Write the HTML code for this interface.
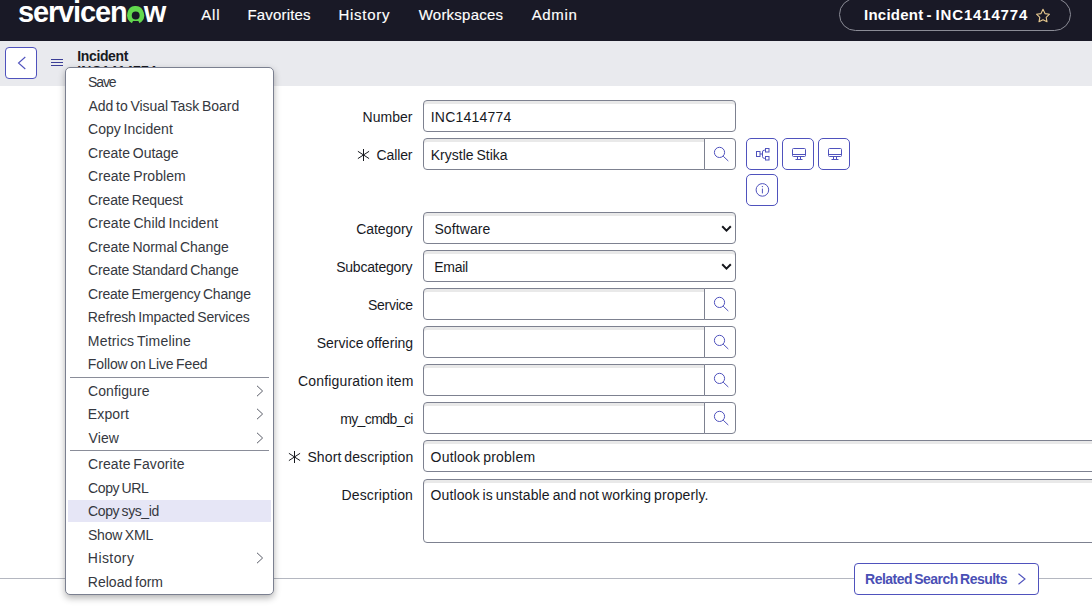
<!DOCTYPE html>
<html><head><meta charset="utf-8"><title>Incident</title>
<style>
*{box-sizing:border-box}
html,body{margin:0;padding:0}
body{width:1092px;height:608px;overflow:hidden;background:#fff;font-family:"Liberation Sans",sans-serif;color:#181a1f;position:relative;font-size:14px}
.a{position:absolute}
.t{position:absolute;line-height:20px;white-space:nowrap}
#top{left:0;top:0;width:1092px;height:41px;background:#191926}
#logo,#crumb{margin:0;padding:0;height:0}
#pill{left:839px;top:-2px;width:232px;height:33px;border:1px solid #8b8c96;border-radius:17px}
#sub{left:0;top:41px;width:1092px;height:45px;background:#e9eaee}
#back{left:5px;top:47px;width:32px;height:32px;border:1px solid #4f52bd;border-radius:4px;background:#fff}
.inp{position:absolute;left:423px;height:32px;border:1px solid #7d8190;border-radius:4px;background:#fff;box-shadow:inset 0 3px 0 0 #e9e9e9}
.ref{width:282px;border-radius:4px 0 0 4px}
.sbtn{position:absolute;left:704px;width:32px;height:32px;border:1px solid #7d8190;border-radius:0 4px 4px 0;background:#fff}
.ibtn{position:absolute;width:32px;height:32px;border:1px solid #4f52bd;border-radius:5px;background:#fff}
#menu{left:65px;top:67px;width:209px;height:528px;background:#fff;border:1px solid #7b8090;border-radius:5px;box-shadow:0 3px 7px rgba(0,0,0,0.3)}
.sep{position:absolute;left:70px;width:199px;height:1px;background:#8a8d99}
#hl{left:68px;top:500px;width:203px;height:22px;background:#e6e6f6}
#hr{left:0;top:578px;width:1092px;height:1px;background:#b4b7c0}
#rel{left:854px;top:563px;width:185px;height:32px;border:1px solid #4f52bd;border-radius:4px;background:#fff}
</style></head><body>
<div id="top" class="a"></div>
<div id="logo"><span class="t" style="left:17.95px;top:1.5px;font-size:29px;letter-spacing:-1.132px;word-spacing:-2.28px;color:#ffffff;font-weight:bold">servicen</span><span class="t" style="left:126.56px;top:1.5px;font-size:29px;letter-spacing:0.000px;word-spacing:-2.28px;color:#62d84e;font-weight:bold">o</span><span class="t" style="left:143.64px;top:1.5px;font-size:29px;letter-spacing:0.000px;word-spacing:-2.28px;color:#ffffff;font-weight:bold">w</span></div>
<svg class="a" style="left:125px;top:5px" width="22" height="20" viewBox="0 0 22 20"><circle cx="10.7" cy="10.5" r="6.3" fill="#191926" stroke="#62d84e" stroke-width="4.7"/><path d="M6.0 20L8 15.9h5.4L15.4 20z" fill="#191926"/></svg>
<div class="t" style="left:201.18px;top:4.6px;font-size:15px;letter-spacing:0.894px;word-spacing:-1.18px;color:#ffffff;-webkit-text-stroke:0.15px #fff">All</div>
<div class="t" style="left:247.54px;top:4.6px;font-size:15px;letter-spacing:0.158px;word-spacing:-1.18px;color:#ffffff;-webkit-text-stroke:0.15px #fff">Favorites</div>
<div class="t" style="left:338.54px;top:4.6px;font-size:15px;letter-spacing:0.712px;word-spacing:-1.18px;color:#ffffff;-webkit-text-stroke:0.15px #fff">History</div>
<div class="t" style="left:418.71px;top:4.6px;font-size:15px;letter-spacing:0.226px;word-spacing:-1.18px;color:#ffffff;-webkit-text-stroke:0.15px #fff">Workspaces</div>
<div class="t" style="left:531.68px;top:4.6px;font-size:15px;letter-spacing:0.655px;word-spacing:-1.18px;color:#ffffff;-webkit-text-stroke:0.15px #fff">Admin</div>
<div id="pill" class="a"></div>
<div id="crumb"><span class="t" style="left:864.09px;top:4.6px;font-size:15px;letter-spacing:0.222px;word-spacing:-1.18px;color:#ffffff;font-weight:bold">Incident -</span> <span class="t" style="left:935.59px;top:4.6px;font-size:15px;letter-spacing:0.831px;word-spacing:-1.18px;color:#ffffff;font-weight:bold">INC1414774</span></div>
<svg class="a" style="left:1035px;top:8px" width="16" height="16" viewBox="0 0 16 16"><path d="M8 1.3l2 4.3 4.5.6-3.3 3.1.8 4.5L8 11.7l-4 2.1.8-4.5-3.3-3.1 4.5-.6z" fill="none" stroke="#e6c88e" stroke-width="1.1" stroke-linejoin="round"/></svg>
<div id="sub" class="a"></div>
<div id="back" class="a"><svg class="a" style="left:11px;top:8px" width="10" height="14" viewBox="0 0 10 14"><path d="M8.3 1L1.5 7l6.8 6" fill="none" stroke="#4f52bd" stroke-width="1.1"/></svg></div>
<svg class="a" style="left:51px;top:58px" width="12" height="9" viewBox="0 0 12 9"><path d="M0 1.5h12M0 4.5h12M0 7.5h12" stroke="#3b3e96" stroke-width="1"/></svg>
<div class="t" style="left:77.35px;top:45.9px;font-size:14px;letter-spacing:-0.383px;word-spacing:-1.10px;color:#181a1f;font-weight:bold">Incident</div>
<div class="t" style="left:77.35px;top:61.1px;font-size:14px;letter-spacing:0.073px;word-spacing:-1.10px;color:#181a1f;font-weight:bold">INC1414774</div>
<div class="t" style="left:362.56px;top:107.1px;font-size:14px;letter-spacing:0.035px;word-spacing:-1.10px;color:#181a1f">Number</div>
<div class="inp" style="top:100px;width:313px"></div>
<div class="t" style="left:376.50px;top:145.1px;font-size:14px;letter-spacing:-0.107px;word-spacing:-1.10px;color:#181a1f">Caller</div>
<div class="inp ref" style="top:138px"></div>
<div class="sbtn" style="top:138px"><svg class="a" style="left:7px;top:6px" width="18" height="18" viewBox="0 0 18 18"><circle cx="7.5" cy="7.4" r="5.1" fill="none" stroke="#4f52bd" stroke-width="1"/><path d="M11.2 11.2L16.3 16" stroke="#4f52bd" stroke-width="1" fill="none"/></svg></div>
<div class="t" style="left:356.25px;top:219.1px;font-size:14px;letter-spacing:-0.062px;word-spacing:-1.10px;color:#181a1f">Category</div>
<div class="inp" style="top:212px;width:313px"><svg class="a" style="left:297px;top:12px" width="11" height="8" viewBox="0 0 11 8"><path d="M1.2 1.3L5.5 5.6L9.8 1.3" fill="none" stroke="#15171c" stroke-width="2"/></svg></div>
<div class="t" style="left:336.14px;top:257.1px;font-size:14px;letter-spacing:-0.213px;word-spacing:-1.10px;color:#181a1f">Subcategory</div>
<div class="inp" style="top:250px;width:313px"><svg class="a" style="left:297px;top:12px" width="11" height="8" viewBox="0 0 11 8"><path d="M1.2 1.3L5.5 5.6L9.8 1.3" fill="none" stroke="#15171c" stroke-width="2"/></svg></div>
<div class="t" style="left:367.89px;top:295.1px;font-size:14px;letter-spacing:-0.244px;word-spacing:-1.10px;color:#181a1f">Service</div>
<div class="inp ref" style="top:288px"></div>
<div class="sbtn" style="top:288px"><svg class="a" style="left:7px;top:6px" width="18" height="18" viewBox="0 0 18 18"><circle cx="7.5" cy="7.4" r="5.1" fill="none" stroke="#4f52bd" stroke-width="1"/><path d="M11.2 11.2L16.3 16" stroke="#4f52bd" stroke-width="1" fill="none"/></svg></div>
<div class="t" style="left:316.64px;top:333.1px;font-size:14px;letter-spacing:0.040px;word-spacing:-1.10px;color:#181a1f">Service offering</div>
<div class="inp ref" style="top:326px"></div>
<div class="sbtn" style="top:326px"><svg class="a" style="left:7px;top:6px" width="18" height="18" viewBox="0 0 18 18"><circle cx="7.5" cy="7.4" r="5.1" fill="none" stroke="#4f52bd" stroke-width="1"/><path d="M11.2 11.2L16.3 16" stroke="#4f52bd" stroke-width="1" fill="none"/></svg></div>
<div class="t" style="left:298.00px;top:371.1px;font-size:14px;letter-spacing:0.172px;word-spacing:-1.10px;color:#181a1f">Configuration item</div>
<div class="inp ref" style="top:364px"></div>
<div class="sbtn" style="top:364px"><svg class="a" style="left:7px;top:6px" width="18" height="18" viewBox="0 0 18 18"><circle cx="7.5" cy="7.4" r="5.1" fill="none" stroke="#4f52bd" stroke-width="1"/><path d="M11.2 11.2L16.3 16" stroke="#4f52bd" stroke-width="1" fill="none"/></svg></div>
<div class="t" style="left:340.13px;top:409.1px;font-size:14px;letter-spacing:-0.586px;word-spacing:-1.10px;color:#181a1f">my_cmdb_ci</div>
<div class="inp ref" style="top:402px"></div>
<div class="sbtn" style="top:402px"><svg class="a" style="left:7px;top:6px" width="18" height="18" viewBox="0 0 18 18"><circle cx="7.5" cy="7.4" r="5.1" fill="none" stroke="#4f52bd" stroke-width="1"/><path d="M11.2 11.2L16.3 16" stroke="#4f52bd" stroke-width="1" fill="none"/></svg></div>
<div class="t" style="left:307.39px;top:447.1px;font-size:14px;letter-spacing:0.115px;word-spacing:-1.10px;color:#181a1f">Short description</div>
<div class="inp" style="top:440px;width:700px"></div>
<div class="t" style="left:341.56px;top:484.6px;font-size:14px;letter-spacing:0.133px;word-spacing:-1.10px;color:#181a1f">Description</div>
<div class="inp" style="top:479px;width:700px;height:64px"></div>
<div class="t" style="left:430.73px;top:107.1px;font-size:14px;letter-spacing:0.228px;word-spacing:-1.10px;color:#181a1f">INC1414774</div>
<div class="t" style="left:430.76px;top:145.1px;font-size:14px;letter-spacing:0.013px;word-spacing:-1.10px;color:#181a1f">Krystle Stika</div>
<div class="t" style="left:434.39px;top:219.1px;font-size:14px;letter-spacing:0.108px;word-spacing:-1.10px;color:#181a1f">Software</div>
<div class="t" style="left:434.31px;top:257.1px;font-size:14px;letter-spacing:-0.280px;word-spacing:-1.10px;color:#181a1f">Email</div>
<div class="t" style="left:430.56px;top:447.1px;font-size:14px;letter-spacing:0.208px;word-spacing:-1.10px;color:#181a1f">Outlook problem</div>
<div class="t" style="left:430.56px;top:484.6px;font-size:14px;letter-spacing:0.123px;word-spacing:-1.10px;color:#181a1f">Outlook is unstable and not working properly.</div>
<svg class="a" style="left:357px;top:148px" width="13" height="14" viewBox="0 0 13 14"><path d="M6.5 1v12M0.9 3.3l11.2 7.3M12.1 3.3L0.9 10.6" stroke="#181a1f" stroke-width="1" fill="none"/></svg>
<svg class="a" style="left:288px;top:450px" width="13" height="14" viewBox="0 0 13 14"><path d="M6.5 1v12M0.9 3.3l11.2 7.3M12.1 3.3L0.9 10.6" stroke="#181a1f" stroke-width="1" fill="none"/></svg>
<div class="ibtn" style="left:746px;top:138px"><svg class="a" style="left:0;top:0" width="30" height="30" viewBox="0 0 30 30"><g fill="none" stroke="#4f52bd" stroke-width="1"><rect x="9.5" y="12.5" width="3.5" height="5"/><rect x="18.5" y="9.5" width="3.5" height="3.5"/><rect x="18.5" y="17.5" width="3.5" height="3.5"/><path d="M13 15h2.5M18.5 11.2h-1.2a1.8 1.8 0 0 0-1.8 1.8v4.5a1.8 1.8 0 0 0 1.8 1.8h1.2"/></g></svg></div>
<div class="ibtn" style="left:782px;top:138px"><svg class="a" style="left:0;top:0" width="30" height="30" viewBox="0 0 30 30"><g fill="none" stroke="#4f52bd" stroke-width="1"><rect x="9.5" y="9.5" width="13" height="8" rx="1"/><path d="M9.5 15.5h13M14.5 17.5v3M17.5 17.5v3M12.5 20.5h7"/></g></svg></div>
<div class="ibtn" style="left:818px;top:138px"><svg class="a" style="left:0;top:0" width="30" height="30" viewBox="0 0 30 30"><g fill="none" stroke="#4f52bd" stroke-width="1"><rect x="9.5" y="9.5" width="13" height="8" rx="1"/><path d="M9.5 15.5h13M14.5 17.5v3M17.5 17.5v3M12.5 20.5h7"/></g></svg></div>
<div class="ibtn" style="left:746px;top:174px"><svg class="a" style="left:0;top:0" width="30" height="30" viewBox="0 0 30 30"><g fill="none" stroke="#4f52bd" stroke-width="1"><circle cx="15.4" cy="14.9" r="6.3"/><path d="M15.4 13.6v4.8"/></g><circle cx="15.4" cy="11.6" r="0.7" fill="#4f52bd"/></svg></div>
<div id="hr" class="a"></div>
<div id="rel" class="a"></div>
<div class="t" style="left:865.05px;top:569.0px;font-size:14px;letter-spacing:-0.522px;word-spacing:-1.10px;color:#4a4fb5;font-weight:bold">Related Search Results</div>
<svg class="a" style="left:1017px;top:573px" width="10" height="12" viewBox="0 0 10 12"><path d="M1.5 0.8L8 6L1.5 11.2" fill="none" stroke="#4f52bd" stroke-width="1.1"/></svg>
<div id="menu" class="a"></div>
<div id="hl" class="a"></div>
<div class="sep" style="top:377px"></div><div class="sep" style="top:450px"></div>
<div class="t" style="left:87.94px;top:72.3px;font-size:14px;letter-spacing:-1.068px;word-spacing:-1.10px;color:#353840">Save</div>
<div class="t" style="left:88.48px;top:95.8px;font-size:14px;letter-spacing:-0.035px;word-spacing:-1.10px;color:#353840">Add to Visual Task Board</div>
<div class="t" style="left:88.05px;top:119.3px;font-size:14px;letter-spacing:0.019px;word-spacing:-1.10px;color:#353840">Copy Incident</div>
<div class="t" style="left:88.05px;top:142.8px;font-size:14px;letter-spacing:-0.013px;word-spacing:-1.10px;color:#353840">Create Outage</div>
<div class="t" style="left:88.05px;top:166.3px;font-size:14px;letter-spacing:0.056px;word-spacing:-1.10px;color:#353840">Create Problem</div>
<div class="t" style="left:88.05px;top:189.8px;font-size:14px;letter-spacing:-0.156px;word-spacing:-1.10px;color:#353840">Create Request</div>
<div class="t" style="left:88.05px;top:213.3px;font-size:14px;letter-spacing:0.080px;word-spacing:-1.10px;color:#353840">Create Child Incident</div>
<div class="t" style="left:88.05px;top:236.8px;font-size:14px;letter-spacing:-0.058px;word-spacing:-1.10px;color:#353840">Create Normal Change</div>
<div class="t" style="left:88.05px;top:260.3px;font-size:14px;letter-spacing:-0.135px;word-spacing:-1.10px;color:#353840">Create Standard Change</div>
<div class="t" style="left:88.05px;top:283.8px;font-size:14px;letter-spacing:-0.206px;word-spacing:-1.10px;color:#353840">Create Emergency Change</div>
<div class="t" style="left:87.86px;top:307.3px;font-size:14px;letter-spacing:-0.165px;word-spacing:-1.10px;color:#353840">Refresh Impacted Services</div>
<div class="t" style="left:87.86px;top:330.8px;font-size:14px;letter-spacing:0.191px;word-spacing:-1.10px;color:#353840">Metrics Timeline</div>
<div class="t" style="left:87.86px;top:354.1px;font-size:14px;letter-spacing:-0.122px;word-spacing:-1.10px;color:#353840">Follow on Live Feed</div>
<div class="t" style="left:88.05px;top:380.6px;font-size:14px;letter-spacing:0.083px;word-spacing:-1.10px;color:#353840">Configure</div>
<div class="t" style="left:87.86px;top:404.1px;font-size:14px;letter-spacing:0.122px;word-spacing:-1.10px;color:#353840">Export</div>
<div class="t" style="left:88.48px;top:427.6px;font-size:14px;letter-spacing:0.128px;word-spacing:-1.10px;color:#353840">View</div>
<div class="t" style="left:88.05px;top:454.1px;font-size:14px;letter-spacing:0.072px;word-spacing:-1.10px;color:#353840">Create Favorite</div>
<div class="t" style="left:88.05px;top:477.6px;font-size:14px;letter-spacing:-0.387px;word-spacing:-1.10px;color:#353840">Copy URL</div>
<div class="t" style="left:88.05px;top:501.1px;font-size:14px;letter-spacing:-0.397px;word-spacing:-1.10px;color:#353840">Copy sys_id</div>
<div class="t" style="left:87.94px;top:524.6px;font-size:14px;letter-spacing:-0.179px;word-spacing:-1.10px;color:#353840">Show XML</div>
<div class="t" style="left:87.86px;top:548.1px;font-size:14px;letter-spacing:0.422px;word-spacing:-1.10px;color:#353840">History</div>
<div class="t" style="left:87.86px;top:571.6px;font-size:14px;letter-spacing:-0.000px;word-spacing:-1.10px;color:#353840">Reload form</div>
<svg class="a" style="left:255px;top:385px" width="10" height="12" viewBox="0 0 10 12"><path d="M2 0.8L7.6 6L2 11.2" fill="none" stroke="#5a5d68" stroke-width="1"/></svg>
<svg class="a" style="left:255px;top:408px" width="10" height="12" viewBox="0 0 10 12"><path d="M2 0.8L7.6 6L2 11.2" fill="none" stroke="#5a5d68" stroke-width="1"/></svg>
<svg class="a" style="left:255px;top:432px" width="10" height="12" viewBox="0 0 10 12"><path d="M2 0.8L7.6 6L2 11.2" fill="none" stroke="#5a5d68" stroke-width="1"/></svg>
<svg class="a" style="left:255px;top:552px" width="10" height="12" viewBox="0 0 10 12"><path d="M2 0.8L7.6 6L2 11.2" fill="none" stroke="#5a5d68" stroke-width="1"/></svg>
</body></html>
